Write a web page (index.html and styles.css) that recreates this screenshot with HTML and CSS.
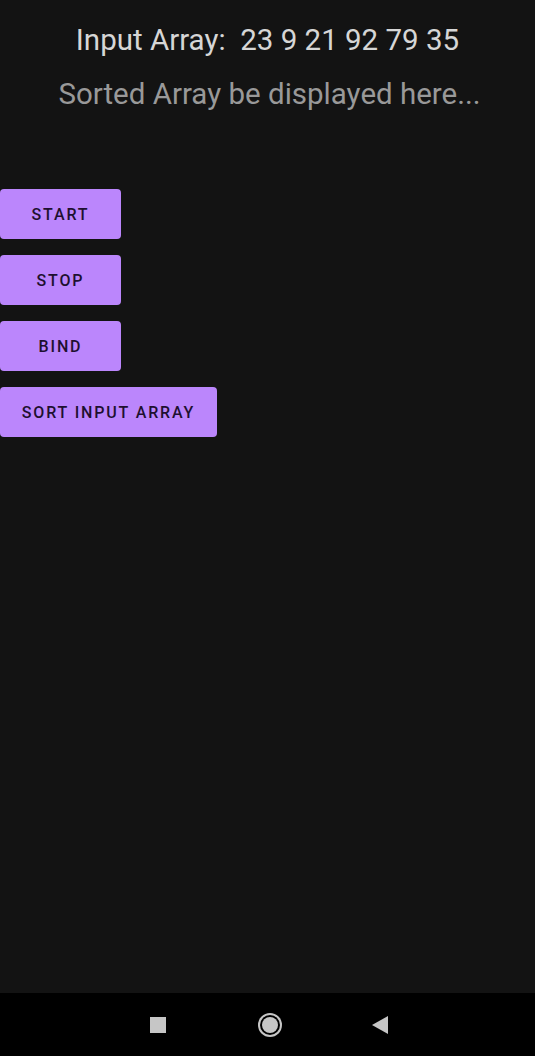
FILE: index.html
```html
<!DOCTYPE html>
<html>
<head>
<meta charset="utf-8">
<link rel="stylesheet" href="styles.css">
</head>
<body>
<div class="screen">
  <main class="content">
    <p class="input-line">Input Array:&nbsp; 23 9 21 92 79 35</p>
    <p class="sorted-line">Sorted Array be displayed here...</p>
    <div class="buttons">
      <button class="btn">START</button>
      <button class="btn">STOP</button>
      <button class="btn">BIND</button>
      <button class="btn wide">SORT INPUT ARRAY</button>
    </div>
  </main>
  <nav class="navbar">
    <span class="nav-square"></span>
    <span class="nav-home"></span>
    <svg class="nav-back" width="16" height="18" viewBox="0 0 16 18"><polygon points="16,0 16,18 0,9" fill="#c6c6c6"/></svg>
  </nav>
</div>
</body>
</html>
```
FILE: styles.css
```css
html, body {
  margin: 0;
  padding: 0;
  background: #131313;
}
.screen {
  width: 535px;
  height: 1056px;
  display: flex;
  flex-direction: column;
  font-family: Roboto, "Noto Sans", sans-serif;
}
.content {
  flex: 1;
  display: flex;
  flex-direction: column;
}
.input-line {
  margin: 22px 0 0;
  text-align: center;
  color: #d6d6d6;
  font-size: 29.5px;
  line-height: 36px;
}
.sorted-line {
  margin: 18px 0 0;
  padding-left: 4px;
  text-align: center;
  color: #999999;
  font-size: 29.5px;
  line-height: 36px;
}
.buttons {
  margin-top: 77px;
  display: flex;
  flex-direction: column;
  align-items: flex-start;
  gap: 16px;
}
.btn {
  width: 121px;
  height: 50px;
  border: none;
  border-radius: 4px;
  background: #bb86fc;
  color: #1e1030;
  font-family: Roboto, "Noto Sans", sans-serif;
  font-size: 16px;
  font-weight: 500;
  letter-spacing: 1.85px;
  padding: 0;
}
.btn.wide {
  width: 217px;
}
.navbar {
  height: 63px;
  background: #000;
  display: flex;
  align-items: center;
  justify-content: flex-start;
  padding-left: 150px;
  padding-top: 1px;
  box-sizing: border-box;
}
.nav-square {
  width: 16px;
  height: 16px;
  background: #c6c6c6;
  margin-right: 96px;
}
.nav-home {
  width: 16px;
  height: 16px;
  border-radius: 50%;
  background: #c6c6c6;
  box-shadow: 0 0 0 2px #000, 0 0 0 4px #c6c6c6;
  margin-right: 94px;
}
.nav-back {
  display: block;
}
```
